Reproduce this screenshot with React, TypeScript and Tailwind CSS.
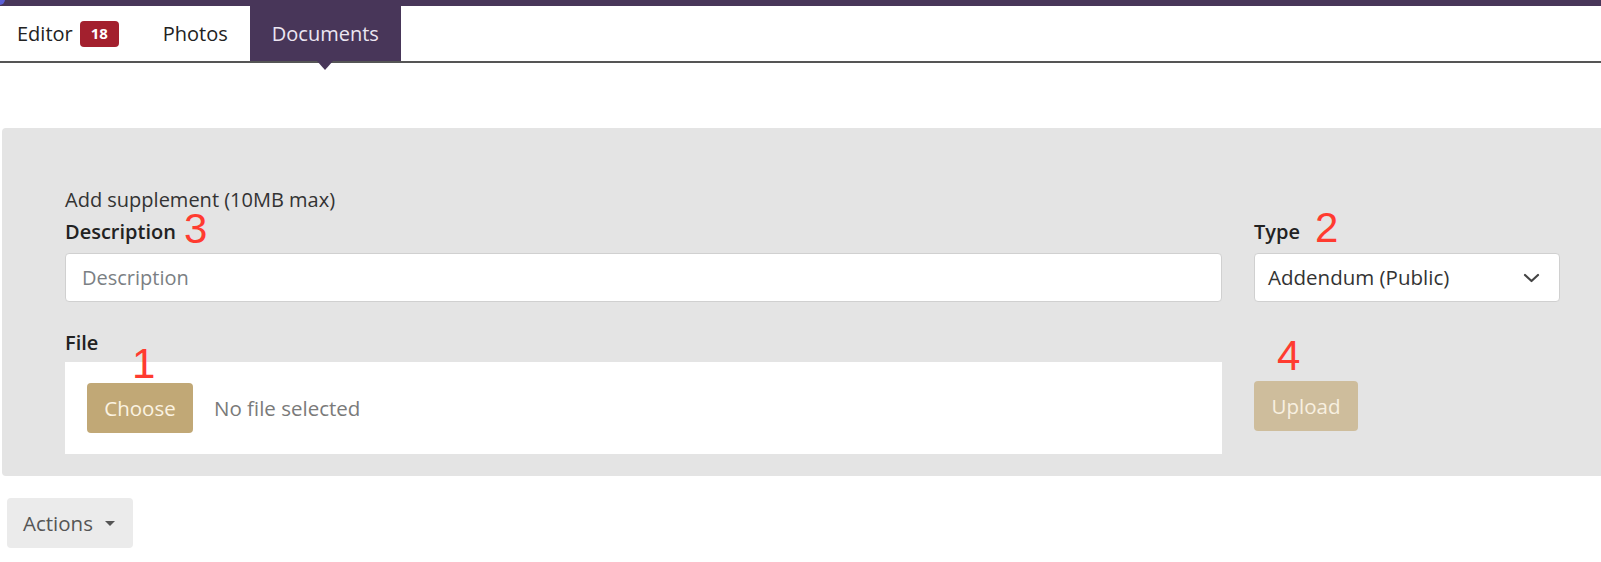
import React from 'react';

const font = { fontFamily: '"Open Sans", "Liberation Sans", sans-serif' };

function Marker({ n, className }: { n: string; className: string }) {
  // red annotation digits drawn over the screenshot
  return (
    <span
      className={`absolute text-[42px] leading-[32px] text-[#ff3b30] font-['Liberation_Sans',sans-serif] ${className}`}
    >
      {n}
    </span>
  );
}

export default function App() {
  return (
    <div className="min-h-screen bg-white text-[#212529] font-['Open_Sans','Liberation_Sans',sans-serif]" style={font}>
      {/* top bar */}
      <div className="relative h-[6px] bg-[#483659]">
        <div className="absolute left-[-6px] top-[-6px] h-[11px] w-[11px] rounded-full bg-[#5b5fd6]" />
      </div>

      {/* tabs */}
      <nav className="flex h-[57px] border-b-2 border-[#555]">
        <div className="flex items-center pl-[17px] pr-[22px] text-[20px] text-[#222]">
          Editor
          <span className="ml-[7px] inline-flex h-[26px] w-[39px] items-center justify-center rounded-[4px] bg-[#a3202e] text-[15px] font-bold text-white">
            18
          </span>
        </div>
        <div className="flex items-center px-[22px] text-[20px] text-[#222]">Photos</div>
        <div className="relative flex items-center bg-[#483659] px-[22px] text-[20px] text-[#ece6f2]">
          Documents
          <span className="absolute left-1/2 top-full -translate-x-1/2 border-x-[8px] border-t-[9px] border-x-transparent border-t-[#483659]" />
        </div>
      </nav>

      {/* supplement panel */}
      <div className="relative ml-[2px] mt-[65px] rounded-l-[4px] bg-[#e4e4e4] pb-[22px] pl-[63px] pt-[60px]">
        <div className="grid grid-cols-[1157px_306px] gap-x-[32px]">
          <p className="col-span-2 text-[20px] leading-[24px] text-[#333]">Add supplement (10MB max)</p>

          <label className="mt-[8px] text-[20px] font-semibold leading-[24px] text-[#222]">Description</label>
          <label className="mt-[8px] text-[20px] font-semibold leading-[24px] text-[#222]">Type</label>

          <input
            placeholder="Description"
            className="mt-[9px] h-[49px] rounded-[4px] border border-[#d0d0d0] bg-white px-[16px] text-[20px] text-[#333] placeholder:text-[#7b7f84] outline-none"
          />
          <div className="mt-[9px] flex h-[49px] items-center justify-between rounded-[4px] border border-[#d0d0d0] bg-white pl-[13px] pr-[19px] text-[20.5px] text-[#333]">
            Addendum (Public)
            <svg width="17" height="10" viewBox="0 0 17 10" fill="none" stroke="#444" strokeWidth="2.2" strokeLinecap="round" strokeLinejoin="round">
              <path d="M2 2l6.5 6 6.5-6" />
            </svg>
          </div>

          <label className="col-span-2 mt-[29px] text-[20px] font-semibold leading-[24px] text-[#222]">File</label>

          <div className="mt-[7px] flex h-[92px] items-center bg-white pl-[22px]">
            <button className="h-[50px] w-[106px] rounded-[4px] bg-[#c1a876] text-[20.5px] text-[#fbf3e2]">Choose</button>
            <span className="ml-[21px] text-[20.5px] text-[#7a7a7a]">No file selected</span>
          </div>
          <div className="mt-[26px]">
            <button className="h-[50px] w-[104px] rounded-[4px] bg-[#cebd9c] text-[20.5px] text-[#f8f0e0]">Upload</button>
          </div>
        </div>

        <Marker n="3" className="left-[182px] top-[85px]" />
        <Marker n="2" className="left-[1313px] top-[84px]" />
        <Marker n="1" className="left-[130px] top-[220px]" />
        <Marker n="4" className="left-[1275px] top-[212px]" />
      </div>

      {/* actions */}
      <div className="mt-[22px] pl-[7px]">
        <button className="flex h-[50px] w-[126px] items-center rounded-[4px] bg-[#ebebeb] pl-[16px] text-[20.5px] text-[#555]">
          Actions
          <span className="ml-[12px] border-x-[5.5px] border-t-[5px] border-x-transparent border-t-[#555]" />
        </button>
      </div>
    </div>
  );
}
